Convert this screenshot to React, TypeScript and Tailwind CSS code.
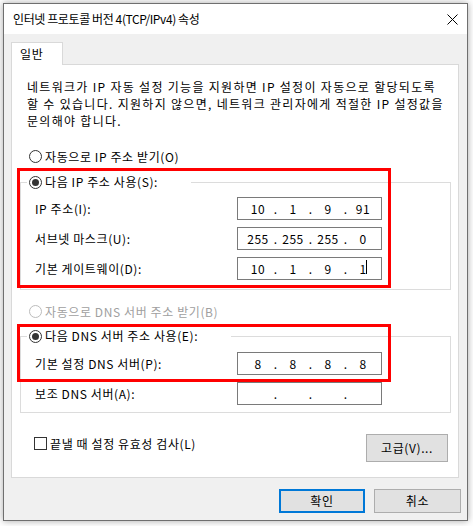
import React from "react";

const font = { fontFamily: '"Noto Sans CJK KR", "Noto Sans", sans-serif' };

function Radio({ checked, disabled }: { checked?: boolean; disabled?: boolean }) {
  return (
    <span
      className={`flex h-[13px] w-[13px] shrink-0 items-center justify-center rounded-full border bg-white ${
        disabled ? "border-[#bcbcbc]" : "border-[#333333]"
      }`}
    >
      {checked && <span className="h-[7px] w-[7px] rounded-full bg-[#333333]" />}
    </span>
  );
}

function IpBox({ values, caret }: { values: string[]; caret?: boolean }) {
  return (
    <div className="flex h-[23px] w-[145px] items-center border border-[#7a7a7a] bg-white pl-[6px] text-[12px] text-black">
      {values.map((v, i) => (
        <React.Fragment key={i}>
          {i > 0 && <span className="w-[7px] text-center leading-none">.</span>}
          <span className="relative w-[28px] text-center leading-none tracking-[0.5px]">
            {v}
            {caret && i === 3 && (
              <span className="absolute left-[17px] top-[-3px] h-[14px] w-px bg-black" />
            )}
          </span>
        </React.Fragment>
      ))}
    </div>
  );
}

function Row({ label, values, caret }: { label: string; values: string[]; caret?: boolean }) {
  return (
    <div className="flex items-center">
      <span className="w-[202px] text-[12px] leading-none tracking-[0.6px]">{label}</span>
      <IpBox values={values} caret={caret} />
    </div>
  );
}

export default function App() {
  return (
    <div className="min-h-[526px] w-[473px] bg-white pl-[3px] pt-[3px]" style={font}>
      <div className="flex h-[518px] w-[465px] flex-col border border-[#6f6f6f] bg-[#f0f0f0] text-black shadow-[0_0_7px_rgba(0,0,0,0.35)]">
        {/* Title bar */}
        <div className="flex h-[30px] items-center justify-between bg-white pl-[9px] pr-[9px]">
          <span className="text-[12px] leading-none tracking-[-0.4px]">인터넷 프로토콜 버전 4(TCP/IPv4) 속성</span>
          <svg width="11" height="11" viewBox="0 0 11 11" className="mt-[1px]">
            <path d="M0.5 0.5 L10.5 10.5 M10.5 0.5 L0.5 10.5" stroke="#000" strokeWidth="1" />
          </svg>
        </div>

        {/* Body */}
        <div className="flex flex-1 flex-col pl-[7px] pr-[8px] pt-[8px]">
          {/* Tab */}
          <div className="relative z-10 -mb-px flex h-[23px] w-[52px] items-center border border-b-0 border-[#d9d9d9] bg-white pl-[8px] text-[12px] leading-none tracking-[0.6px]">
            일반
          </div>

          {/* Panel */}
          <div className="relative flex h-[414px] flex-col border border-[#d9d9d9] bg-white">
            <div className="pl-[15px] pt-[13px] text-[12px] leading-[17px] tracking-[1.3px] whitespace-nowrap">
              네트워크가 IP 자동 설정 기능을 지원하면 IP 설정이 자동으로 할당되도록
              <br />
              할 수 있습니다. 지원하지 않으면, 네트워크 관리자에게 적절한 IP 설정값을
              <br />
              문의해야 합니다.
            </div>

            <div className="mt-[19px] flex h-[17px] items-center gap-[3px] pl-[17px] text-[12px] leading-none tracking-[0.6px]">
              <Radio />
              <span>자동으로 IP 주소 받기(O)</span>
            </div>

            {/* Group 1 */}
            <div className="ml-[8px] mt-[17px] w-[431px] border border-[#dcdcdc] pb-[9px]">
              <div className="-mt-[10px] ml-[6px] flex h-[18px] w-fit items-center gap-[3px] bg-white pl-[2px] pr-[33px] text-[12px] leading-none tracking-[0.6px]">
                <Radio checked />
                <span>다음 IP 주소 사용(S):</span>
              </div>
              <div className="mt-[6px] flex flex-col gap-[7px] pl-[14px]">
                <Row label="IP 주소(I):" values={["10", "1", "9", "91"]} />
                <Row label="서브넷 마스크(U):" values={["255", "255", "255", "0"]} />
                <Row label="기본 게이트웨이(D):" values={["10", "1", "9", "1"]} caret />
              </div>
            </div>

            <div className="mt-[13px] flex h-[17px] items-center gap-[3px] pl-[17px] text-[12px] leading-none tracking-[0.6px] text-[#a0a0a0]">
              <Radio disabled />
              <span>자동으로 DNS 서버 주소 받기(B)</span>
            </div>

            {/* Group 2 */}
            <div className="ml-[8px] mt-[16px] w-[431px] border border-[#dcdcdc] pb-[7px]">
              <div className="-mt-[10px] ml-[6px] flex h-[18px] w-fit items-center gap-[3px] bg-white pl-[2px] pr-[33px] text-[12px] leading-none tracking-[0.6px]">
                <Radio checked />
                <span>다음 DNS 서버 주소 사용(E):</span>
              </div>
              <div className="mt-[7px] flex flex-col gap-[7px] pl-[14px]">
                <Row label="기본 설정 DNS 서버(P):" values={["8", "8", "8", "8"]} />
                <Row label="보조 DNS 서버(A):" values={["", "", "", ""]} />
              </div>
            </div>

            {/* Checkbox + advanced */}
            <div className="mt-[21px] flex items-start justify-between pl-[22px] pr-[10px]">
              <div className="mt-[3px] flex items-center gap-[3px] text-[12px] leading-none tracking-[0.6px]">
                <span className="h-[13px] w-[13px] border border-[#333333] bg-white" />
                <span>끝낼 때 설정 유효성 검사(L)</span>
              </div>
              <button className="flex h-[28px] w-[82px] items-center justify-center border border-[#adadad] bg-[#e1e1e1] text-[12px] leading-none tracking-[0.6px]">
                고급(V)...
              </button>
            </div>

            {/* Annotation boxes */}
            <div className="pointer-events-none absolute left-[5px] top-[103px] h-[120px] w-[374px] border-[3px] border-[#ff0000]" />
            <div className="pointer-events-none absolute left-[5px] top-[259px] h-[58px] w-[374px] border-[3px] border-[#ff0000]" />
          </div>

          {/* Bottom buttons */}
          <div className="mt-[11px] flex justify-end gap-[9px] pr-0">
            <button className="flex h-[24px] w-[86px] items-center justify-center border-2 border-[#0078d7] bg-[#e1e1e1] text-[12px] leading-none tracking-[0.6px]">
              확인
            </button>
            <button className="mr-[-2px] flex h-[24px] w-[87px] items-center justify-center border border-[#adadad] bg-[#e1e1e1] text-[12px] leading-none tracking-[0.6px]">
              취소
            </button>
          </div>
        </div>
      </div>
    </div>
  );
}
